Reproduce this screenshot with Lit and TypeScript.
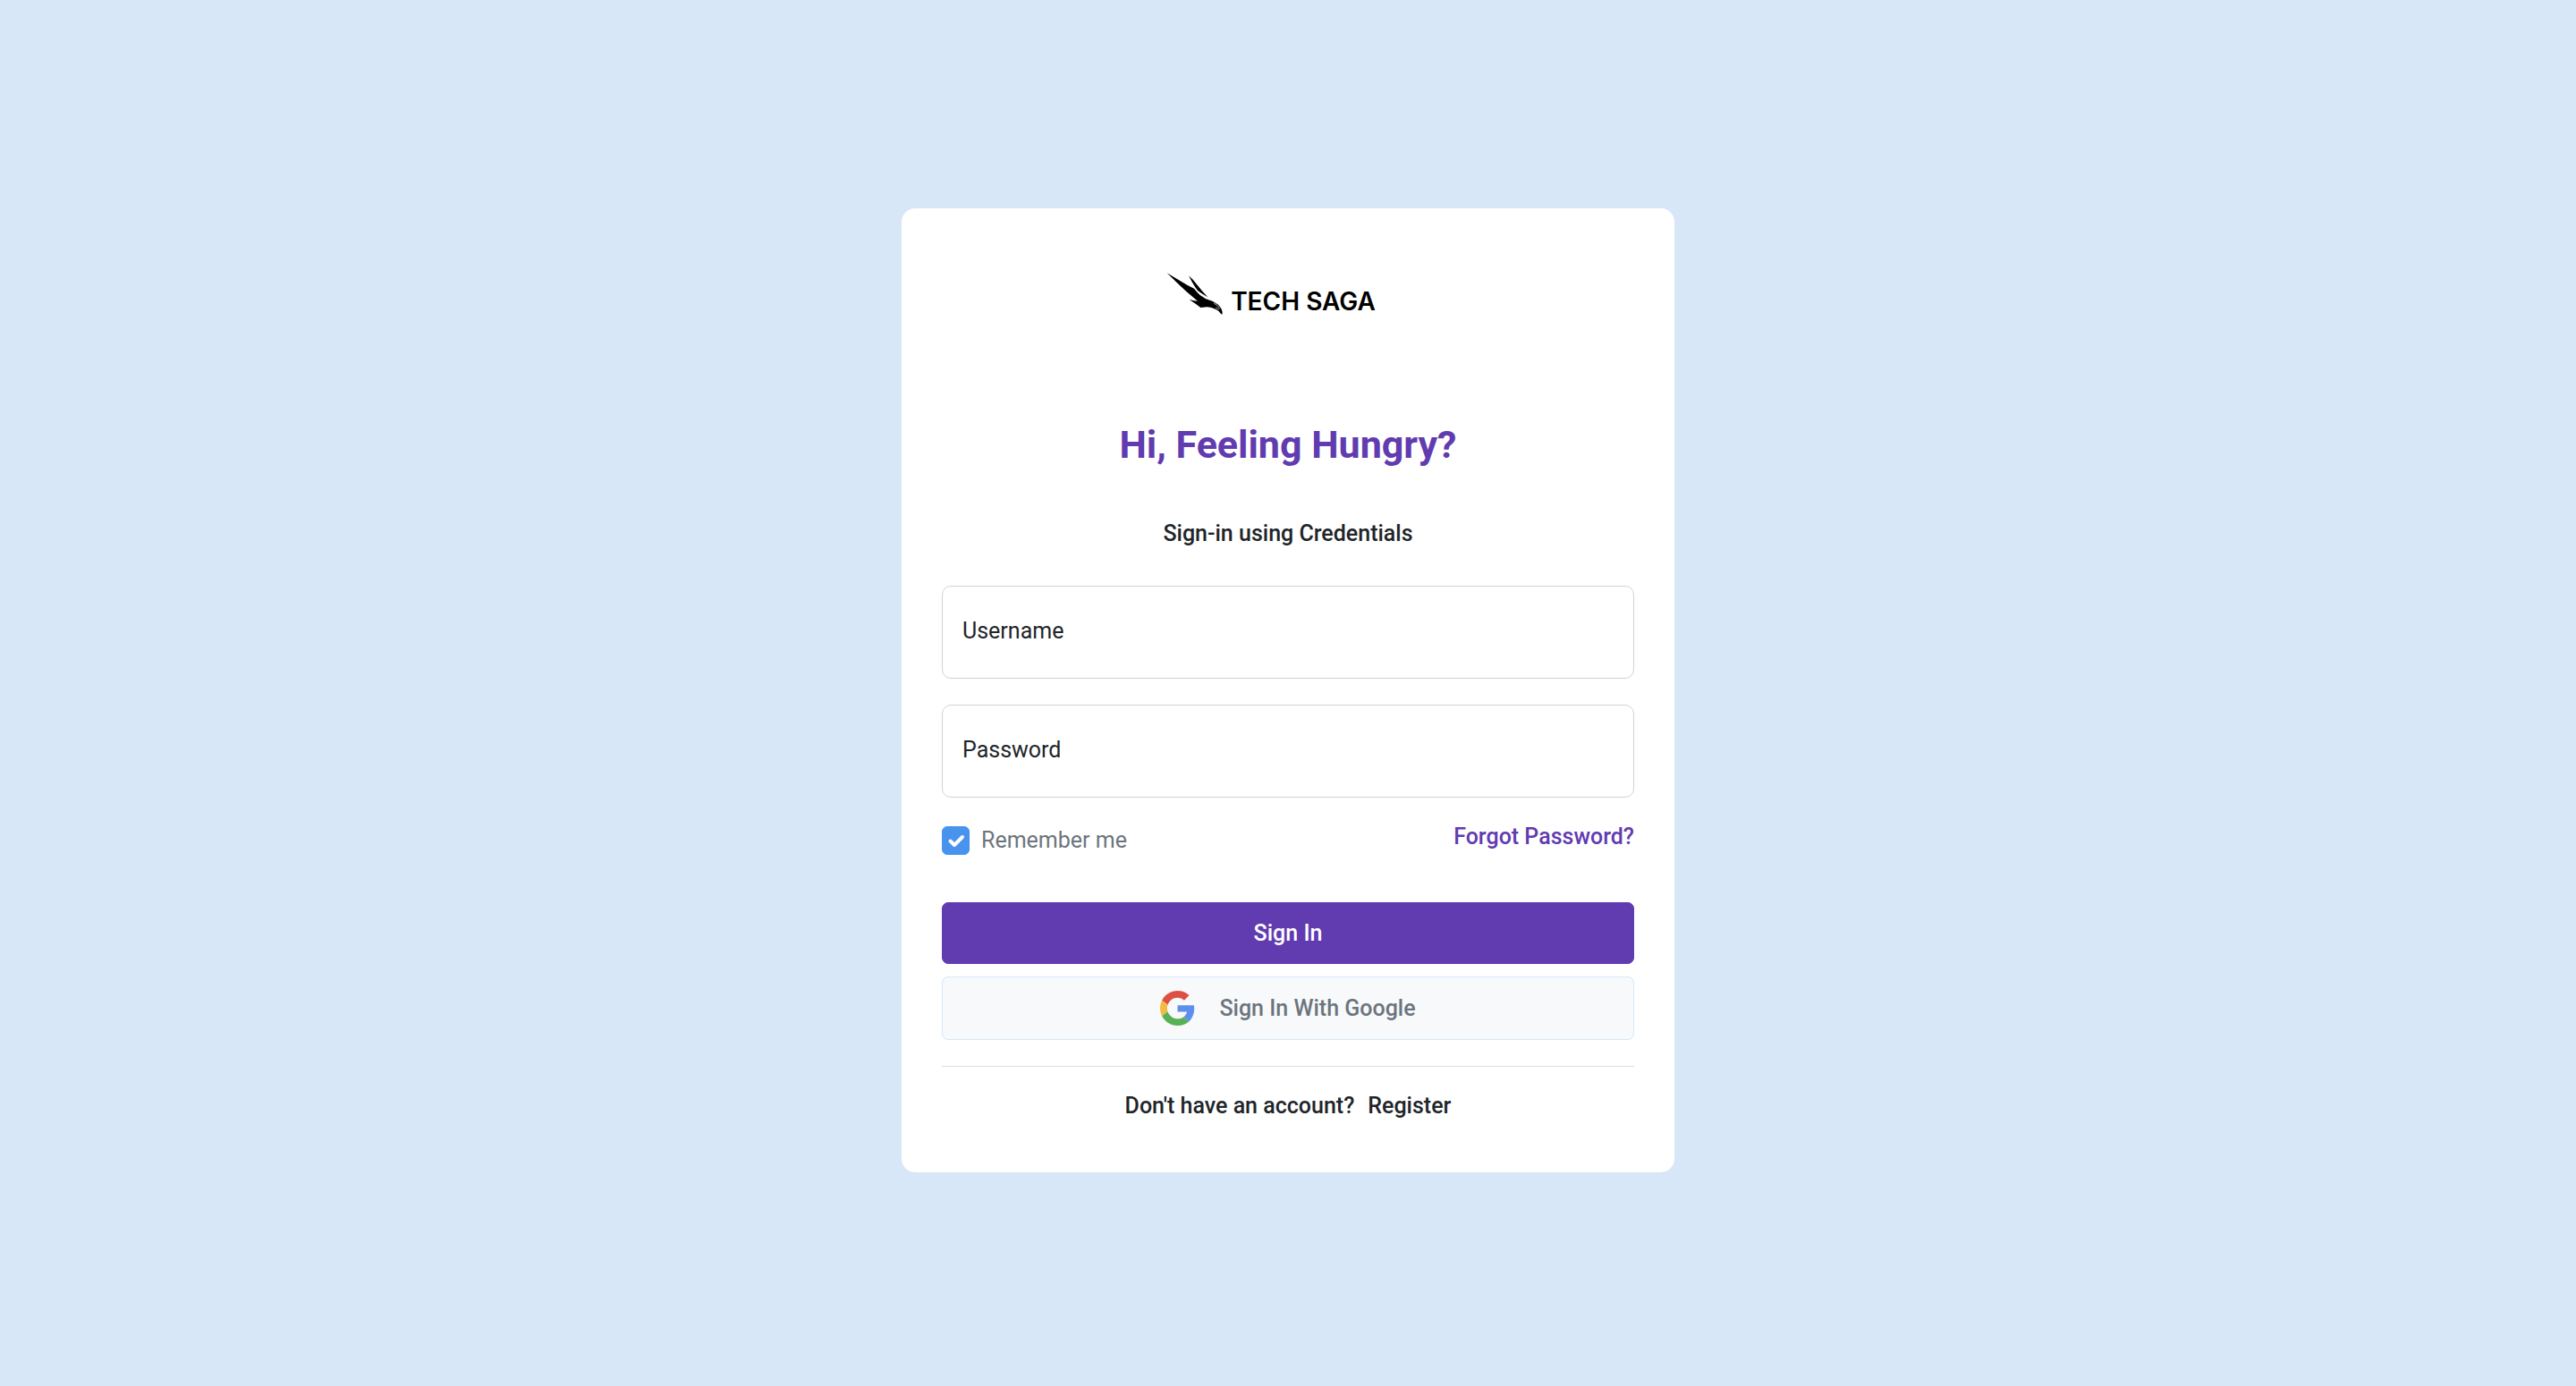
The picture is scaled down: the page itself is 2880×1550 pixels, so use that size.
import { LitElement, html, css, svg } from "lit";
import { customElement, state } from "lit/decorators.js";

const falconMark = svg`
  <path d="M11 15 L50 38 L80 56 L102 67 L112 79 L122 89 L140 101 L165 110 L183 121 L193 134 L197 146 L196 155 L190 150 L184 142 L175 137 L160 131 L146 129 L124 131 L107 118 L86 104 L102 108 L114 109 L100 97 L76 77 L48 51 Z"/>
  <path d="M84 24 L98 37 L114 57 L130 76 L148 96 L130 85 L114 74 L105 61 L95 45 Z"/>
  <path d="M168 116 L180 124 L188 135" fill="none" stroke="#fff" stroke-width="2"/>
  <path d="M174 131 L185 137" fill="none" stroke="#fff" stroke-width="2"/>
`;

const googleMark = svg`
  <path fill="#dd5144" d="M24 9.5c3.54 0 6.71 1.22 9.21 3.6l6.85-6.85C35.9 2.38 30.47 0 24 0 14.62 0 6.51 5.38 2.56 13.22l7.98 6.19C12.43 13.72 17.74 9.5 24 9.5z"/>
  <path fill="#5f8fee" d="M46.98 24.55c0-1.57-.15-3.09-.38-4.55H24v9.02h12.94c-.58 2.96-2.26 5.48-4.78 7.18l7.73 6c4.51-4.18 7.09-10.36 7.09-17.65z"/>
  <path fill="#f2bc42" d="M10.53 28.59c-.48-1.45-.76-2.99-.76-4.59s.27-3.14.76-4.59l-7.98-6.19C.92 16.46 0 20.12 0 24c0 3.88.92 7.54 2.56 10.78l7.97-6.19z"/>
  <path fill="#58b155" d="M24 48c6.48 0 11.93-2.13 15.89-5.81l-7.73-6c-2.15 1.45-4.92 2.3-8.16 2.3-6.26 0-11.57-4.22-13.47-9.91l-7.98 6.19C6.51 42.62 14.62 48 24 48z"/>
`;

@customElement("app-root")
export class AppRoot extends LitElement {
  @state() private remember = true;

  static styles = css`
    :host {
      display: block;
      font-family: Roboto, "Liberation Sans", sans-serif;
      font-size: 25px;
      line-height: 37px;
      color: #212529;
    }
    * {
      box-sizing: border-box;
    }
    .page {
      min-height: 100vh;
      display: flex;
      align-items: center;
      justify-content: center;
      padding-bottom: 6px;
      background: #d7e7f7;
    }
    .card {
      width: 30%;
      min-width: 620px;
      padding: 72px 45px 56px;
      border-radius: 15px;
      background: #fff;
      display: flex;
      flex-direction: column;
    }
    .logo {
      display: flex;
      justify-content: center;
      gap: 9px;
      padding-right: 38px;
      color: #000;
    }
    .mark {
      width: 63px;
      height: 48px;
    }
    .brand {
      font-family: Inter, sans-serif;
      font-size: 28px;
      font-weight: 600;
      line-height: 32px;
      padding-top: 16px;
      white-space: nowrap;
    }
    h1 {
      margin: 118px 0 54px;
      font-size: 43px;
      line-height: 53px;
      font-weight: 700;
      text-align: center;
      color: #613bb0;
    }
    h2 {
      margin: 0 0 40px;
      font-size: inherit;
      font-weight: 500;
      text-align: center;
    }
    form {
      display: flex;
      flex-direction: column;
    }
    .field {
      display: grid;
      margin-bottom: 29px;
    }
    .field input,
    .field label {
      grid-area: 1 / 1;
    }
    .field input {
      width: 100%;
      height: 104px;
      padding: 42px 22px 10px;
      border: 1px solid #ced4da;
      border-radius: 10px;
      background: #fff;
      font: inherit;
      color: inherit;
    }
    .field label {
      padding: 32px 23px;
      pointer-events: none;
    }
    .field:focus-within label,
    .field input:not(:placeholder-shown) + label {
      padding-top: 6px;
      font-size: 20px;
    }
    .options {
      display: flex;
      justify-content: space-between;
      align-items: flex-start;
      margin: -4px 0 51px;
    }
    .remember {
      display: flex;
      align-items: center;
      gap: 13px;
      padding-top: 4px;
      color: #6c757d;
    }
    .tick {
      display: grid;
    }
    .tick input,
    .tick svg {
      grid-area: 1 / 1;
      width: 31px;
      height: 32px;
      margin: 0;
    }
    .tick input {
      appearance: none;
      border: 1px solid #ced4da;
      border-radius: 6px;
    }
    .tick input:checked {
      border-color: #4893ed;
      background: #4893ed;
    }
    .tick svg {
      pointer-events: none;
      fill: none;
      stroke: #fff;
      stroke-width: 4;
      stroke-linecap: round;
      stroke-linejoin: round;
    }
    a {
      color: inherit;
      text-decoration: none;
      font-weight: 500;
    }
    .forgot {
      color: #613bb0;
    }
    button {
      display: flex;
      align-items: center;
      justify-content: center;
      gap: 27px;
      border: 1px solid;
      border-radius: 7px;
      font: inherit;
      font-weight: 500;
      cursor: pointer;
    }
    .primary {
      padding: 15px;
      border-color: #613bb0;
      background: #613bb0;
      color: #fff;
    }
    .google {
      margin-top: 14px;
      padding: 15px;
      border-color: #d7e7f7;
      background: #f8f9fb;
      color: #6c757d;
    }
    .google svg {
      width: 39px;
      height: 39px;
    }
    hr {
      width: 100%;
      margin: 29px 0 25px;
      border: 0;
      border-top: 1px solid #dee0e2;
    }
    .register {
      margin: 0;
      display: flex;
      justify-content: center;
      gap: 15px;
      font-weight: 500;
    }
  `;

  render() {
    return html`
      <main class="page">
        <section class="card">
          <div class="logo">
            <svg class="mark" viewBox="9 14 189 144" aria-hidden="true">${falconMark}</svg>
            <span class="brand">TECH SAGA</span>
          </div>
          <h1>Hi, Feeling Hungry?</h1>
          <h2>Sign-in using Credentials</h2>
          <form @submit=${(e: Event) => e.preventDefault()}>
            <div class="field">
              <input id="username" type="text" placeholder=" " autocomplete="username" />
              <label for="username">Username</label>
            </div>
            <div class="field">
              <input id="password" type="password" placeholder=" " autocomplete="current-password" />
              <label for="password">Password</label>
            </div>
            <div class="options">
              <label class="remember">
                <span class="tick">
                  <input
                    type="checkbox"
                    .checked=${this.remember}
                    @change=${(e: Event) => (this.remember = (e.target as HTMLInputElement).checked)}
                  />
                  ${this.remember
                    ? html`<svg viewBox="0 0 31 32" aria-hidden="true"><path d="M9.5 16.5 L14 21 L23 12" /></svg>`
                    : ""}
                </span>
                Remember me
              </label>
              <a class="forgot" href="#forgot">Forgot Password?</a>
            </div>
            <button class="primary" type="submit">Sign In</button>
            <button class="google" type="button">
              <svg viewBox="0 0 48 48" aria-hidden="true">${googleMark}</svg>
              Sign In With Google
            </button>
          </form>
          <hr />
          <p class="register">
            <span>Don't have an account?</span>
            <a href="#register">Register</a>
          </p>
        </section>
      </main>
    `;
  }
}
